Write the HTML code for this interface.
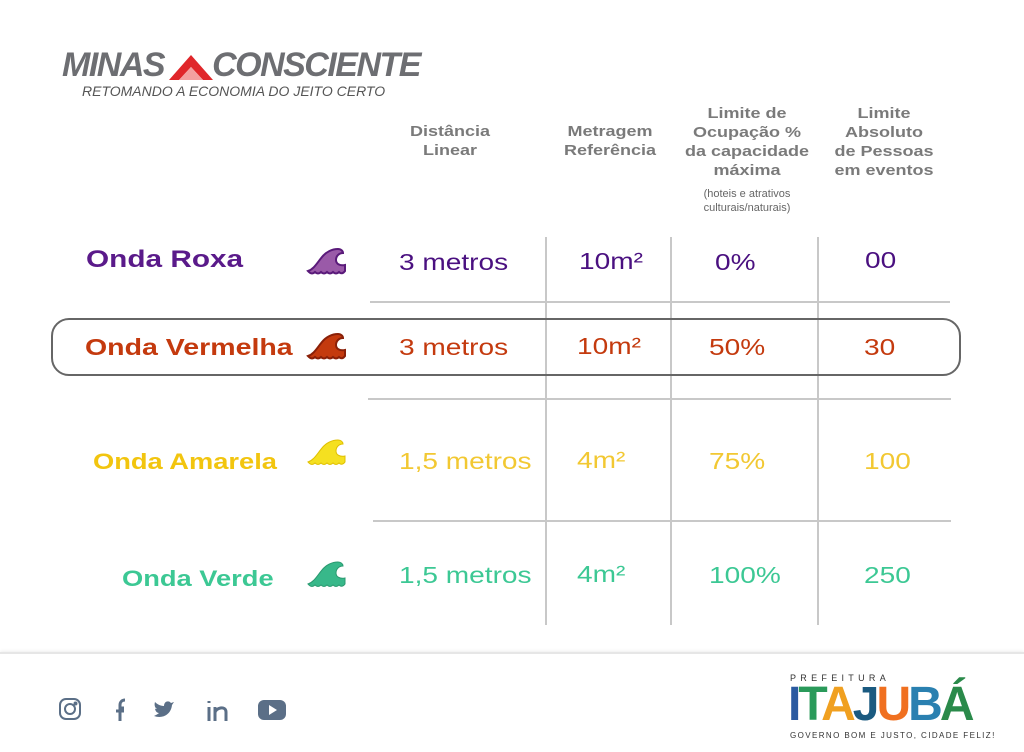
<!DOCTYPE html>
<html><head><meta charset="utf-8"><style>
body{margin:0;width:1024px;height:750px;background:#fff;position:relative;overflow:hidden;font-family:"Liberation Sans",sans-serif}
.a{position:absolute}
.h{color:#7a7a7a;font-weight:bold;font-size:15px;text-align:center;line-height:19px;transform:scaleX(1.2)}
.v{position:absolute;width:2px;background:#c8c8c8;top:237px;height:388px}
.hl{position:absolute;height:2px;background:#c8c8c8}
.c{position:absolute;font-size:23px;transform:scaleX(1.22);transform-origin:left;white-space:nowrap}
.n{position:absolute;font-weight:bold;font-size:24px;transform:scaleX(1.24);transform-origin:left;white-space:nowrap}
</style></head><body>
<div class="a" style="left:62px;top:46px;font-size:34px;font-weight:bold;font-style:italic;color:#6d6e72;letter-spacing:-1.5px;white-space:nowrap">MINAS<span style="display:inline-block;width:48px"></span>CONSCIENTE</div>
<svg class="a" style="left:169px;top:53px" width="44" height="28"><polygon points="0,27 22,2 44,27 34,27 22,14 10,27" fill="#e0262a"/><polygon points="10,27 22,14 34,27" fill="#f3a0a0"/></svg>
<div class="a" style="left:82px;top:83px;font-size:14px;font-style:italic;color:#555">RETOMANDO A ECONOMIA DO JEITO CERTO</div>

<div class="a h" style="left:390px;top:122px;width:120px">Distância<br>Linear</div>
<div class="a h" style="left:550px;top:122px;width:120px">Metragem<br>Referência</div>
<div class="a h" style="left:683px;top:104px;width:128px">Limite de<br>Ocupação %<br>da capacidade<br>máxima</div>
<div class="a" style="left:683px;top:187px;width:128px;text-align:center;font-size:11px;color:#666;line-height:14px">(hoteis e atrativos<br>culturais/naturais)</div>
<div class="a h" style="left:820px;top:104px;width:128px">Limite<br>Absoluto<br>de Pessoas<br>em eventos</div>

<div class="v" style="left:545px"></div><div class="v" style="left:670px"></div><div class="v" style="left:817px"></div>
<div class="hl" style="left:370px;width:580px;top:301px"></div>
<div class="hl" style="left:368px;width:583px;top:398px"></div>
<div class="hl" style="left:373px;width:578px;top:520px"></div>
<div class="a" style="left:51px;top:318px;width:906px;height:54px;border:2px solid #666;border-radius:18px"></div>

<div class="n" style="left:86px;top:246px;color:#5a1a8a">Onda Roxa</div>
<div class="n" style="left:85px;top:334px;color:#c43a0e;font-size:23px">Onda Vermelha</div>
<div class="n" style="left:93px;top:449px;color:#f2c50f;font-size:22px">Onda Amarela</div>
<div class="n" style="left:122px;top:566px;color:#3cc894;font-size:22px">Onda Verde</div>

<svg width="0" height="0" style="position:absolute"><defs><path id="w" d="M3,23 C9,21 12,15 17,9 C21,4 27,1 33,1 C36,1 38,3 38,5 C34,5 31,8 31,12 C31,16 35,18 40,17 L40,23 Q37,27 34,24 Q31,27 28,24 Q25,27 22,24 Q19,27 16,24 Q13,27 10,24 Q7,27 4,24 Z"/></defs></svg>
<svg class="a" style="left:305px;top:248px" width="42" height="30"><use href="#w" fill="#9a5aa8" stroke="#5a1a7a" stroke-width="2"/></svg>
<svg class="a" style="left:305px;top:333px" width="42" height="30"><use href="#w" fill="#c43a0e" stroke="#8a2008" stroke-width="2"/></svg>
<svg class="a" style="left:305px;top:439px" width="42" height="30"><use href="#w" fill="#f5e020" stroke="#e0c000" stroke-width="1"/></svg>
<svg class="a" style="left:305px;top:561px" width="42" height="30"><use href="#w" fill="#38b88a" stroke="#2a9a70" stroke-width="1"/></svg>

<div class="c" style="left:399px;top:249px;color:#4a1080">3 metros</div>
<div class="c" style="left:579px;top:248px;color:#4a1080">10m²</div>
<div class="c" style="left:715px;top:249px;color:#4a1080">0%</div>
<div class="c" style="left:865px;top:247px;color:#4a1080">00</div>

<div class="c" style="left:399px;top:334px;color:#c43a0e">3 metros</div>
<div class="c" style="left:577px;top:333px;color:#c43a0e">10m²</div>
<div class="c" style="left:709px;top:334px;color:#c43a0e">50%</div>
<div class="c" style="left:864px;top:334px;color:#c43a0e">30</div>

<div class="c" style="left:399px;top:448px;color:#f2c832">1,5 metros</div>
<div class="c" style="left:577px;top:447px;color:#f2c832">4m²</div>
<div class="c" style="left:709px;top:448px;color:#f2c832">75%</div>
<div class="c" style="left:864px;top:448px;color:#f2c832">100</div>

<div class="c" style="left:399px;top:562px;color:#3cc894">1,5 metros</div>
<div class="c" style="left:577px;top:561px;color:#3cc894">4m²</div>
<div class="c" style="left:709px;top:562px;color:#3cc894">100%</div>
<div class="c" style="left:864px;top:562px;color:#3cc894">250</div>

<div class="a" style="left:0;top:652px;width:1024px;height:98px;background:#fff;border-top:2px solid #e6e6e6;box-shadow:0 -1px 3px #eee"></div>
<svg class="a" style="left:58px;top:697px" width="240" height="26" fill="none" stroke="#5b6f87" stroke-width="2">
<rect x="2" y="2" width="20" height="20" rx="6"/><circle cx="12" cy="12" r="5"/><circle cx="17.5" cy="6.5" r="1" fill="#5b6f87"/>
<path d="M62,24 V11 H66 M58,14 H66 M62,24 V8 C62,5 64,3 67,3" stroke-width="3"/>
<path d="M96,19 C104,22 113,18 114,8 L116,5 L113,6 C111,3 106,4 106,9 C102,9 99,7 97,5 C96,8 97,11 99,12 C98,12 97,12 97,11 C97,14 99,16 101,16 C100,17 98,18 96,19Z" fill="#5b6f87" stroke="none"/>
<path d="M151,10 V24 M151,4 V6 M157,10 V24 M157,16 C157,11 168,8 168,15 V24" stroke-width="3"/>
<rect x="200" y="3" width="28" height="20" rx="6" fill="#5b6f87" stroke="none"/><polygon points="211,8 211,18 219,13" fill="#fff" stroke="none"/>
</svg>
<div class="a" style="left:790px;top:673px;font-size:9px;letter-spacing:4.3px;color:#333">PREFEITURA</div>
<div class="a" style="left:788px;top:682px;font-size:48px;font-weight:bold;letter-spacing:-3px;line-height:46px;transform:scaleX(1.0);transform-origin:left"><span style="color:#2a5aa0">I</span><span style="color:#2a9a5a">T</span><span style="color:#f0a020">A</span><span style="color:#1a5a80">J</span><span style="color:#f07020">U</span><span style="color:#2a80b0">B</span><span style="color:#2a8a4a">Á</span></div>
<div class="a" style="left:790px;top:731px;font-size:8px;letter-spacing:1.4px;color:#333;white-space:nowrap">GOVERNO BOM E JUSTO, CIDADE FELIZ!</div>
</body></html>
